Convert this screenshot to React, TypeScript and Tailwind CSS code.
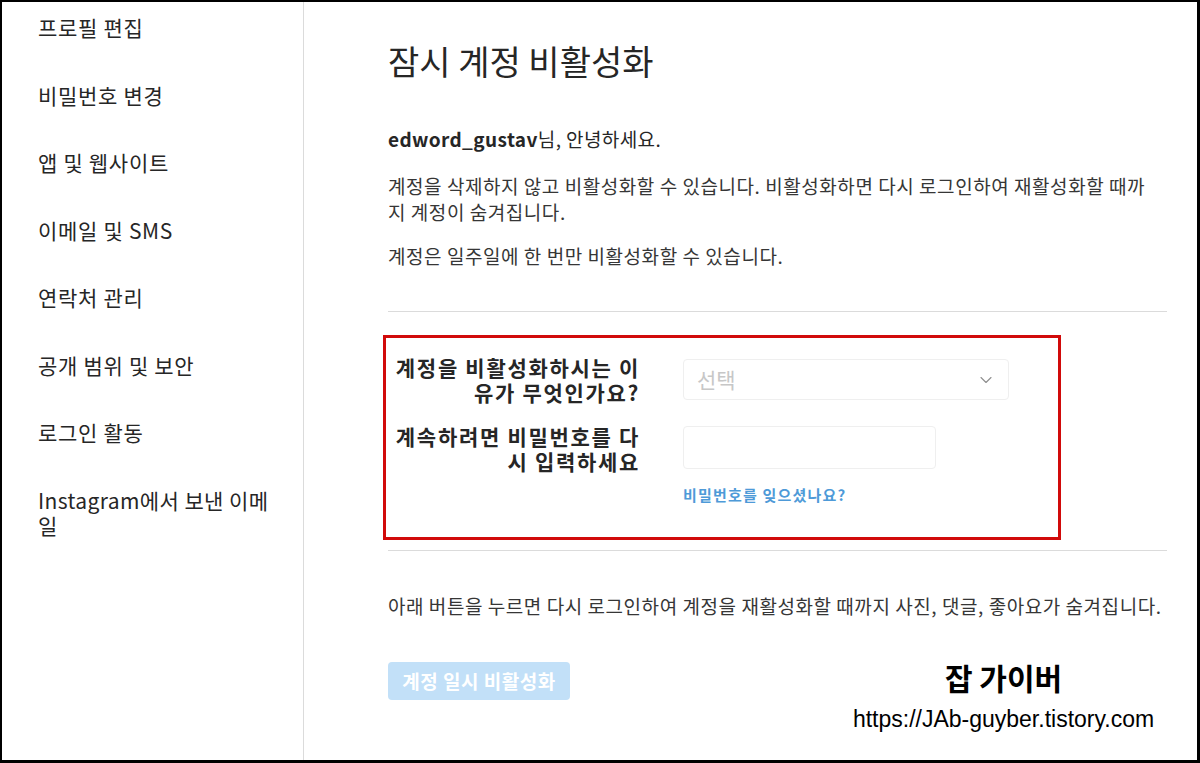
import React from 'react';
import { ChevronDown } from 'lucide-react';

const font = "font-['Noto_Sans_CJK_KR','Noto_Sans',sans-serif]";

const menu = [
  '프로필 편집',
  '비밀번호 변경',
  '앱 및 웹사이트',
  '이메일 및 SMS',
  '연락처 관리',
  '공개 범위 및 보안',
  '로그인 활동',
];

export default function App() {
  return (
    <div
      className={`relative w-[1200px] h-[763px] bg-white border-l-2 border-t-2 border-r-[3px] border-b-[3px] border-black flex overflow-hidden text-[#262626] ${font}`}
    >
      {/* Sidebar */}
      <aside className="w-[302px] shrink-0 border-r border-[#dbdbdb] pl-[36px] pt-[13px] flex flex-col gap-[42.5px]">
        {menu.map((m) => (
          <div key={m} className="text-[21px] leading-[25px] tracking-[0.7px] text-[#262626] whitespace-nowrap">
            {m}
          </div>
        ))}
        <div className="text-[21px] leading-[25px] tracking-[0.4px] text-[#262626] w-[250px]">
          Instagram에서 보낸 이메
          <br />
          일
        </div>
      </aside>

      {/* Main */}
      <main className="flex-1 pl-[84px] pr-[30px] pt-[37px] flex flex-col">
        <h1 className="text-[34px] leading-[44px] font-normal text-[#262626]">잠시 계정 비활성화</h1>

        <p className="mt-[43px] text-[19px] leading-[26px] tracking-[0.4px]">
          <span className="font-bold">edword_gustav</span>님, 안녕하세요.
        </p>
        <p className="mt-[21px] text-[19px] leading-[26px] tracking-[0.55px] text-[#363636] whitespace-nowrap">
          계정을 삭제하지 않고 비활성화할 수 있습니다. 비활성화하면 다시 로그인하여 재활성화할 때까
          <br />
          지 계정이 숨겨집니다.
        </p>
        <p className="mt-[18px] text-[19px] leading-[26px] tracking-[0.55px] text-[#363636]">
          계정은 일주일에 한 번만 비활성화할 수 있습니다.
        </p>

        <div className="mt-[42px] h-px bg-[#dbdbdb]" />

        {/* Highlighted form */}
        <div className="mt-[23px] ml-[-5px] w-[678px] h-[205px] border-[3px] border-[#d10a0a] pt-[17px]">
          <div className="flex">
            <div className="w-[254px] text-right text-[21px] leading-[25px] tracking-[1.7px] font-bold whitespace-nowrap">
              계정을 비활성화하시는 이
              <br />
              유가 무엇인가요?
            </div>
            <div className="ml-[43px] mt-[4px] w-[326px] h-[41px] border border-[#efefef] rounded-[4px] bg-white flex items-center justify-between pl-[13px] pr-[12px]">
              <span className="text-[21px] text-[#c7c7c7]">선택</span>
              <ChevronDown size={20} strokeWidth={1.3} className="text-[#8e8e8e]" />
            </div>
          </div>

          <div className="flex mt-[19px]">
            <div className="w-[254px] text-right text-[21px] leading-[25px] tracking-[1.7px] font-bold whitespace-nowrap">
              계속하려면 비밀번호를 다
              <br />
              시 입력하세요
            </div>
            <div className="ml-[43px] flex flex-col">
              <div className="mt-[2px] w-[253px] h-[43px] border border-[#efefef] rounded-[4px] bg-white" />
              <a className="mt-[17px] text-[15px] leading-[18px] tracking-[1.2px] font-semibold text-[#4e9ad8]">
                비밀번호를 잊으셨나요?
              </a>
            </div>
          </div>
        </div>

        <div className="mt-[10px] h-px bg-[#dbdbdb]" />

        <p className="mt-[42px] text-[19px] leading-[26px] tracking-[0.55px] text-[#363636] whitespace-nowrap">
          아래 버튼을 누르면 다시 로그인하여 계정을 재활성화할 때까지 사진, 댓글, 좋아요가 숨겨집니다.
        </p>

        <button className="mt-[43px] w-[182px] h-[38px] rounded-[4px] bg-[#c2e0f8] text-white text-[19px] tracking-[0.5px] font-bold">
          계정 일시 비활성화
        </button>
      </main>

      {/* Watermark overlay */}
      <div className="absolute left-[841px] top-[656px] w-[321px] flex flex-col items-center">
        <div className="text-[30px] leading-[38px] font-bold text-black">잡 가이버</div>
        <div className="mt-[9px] text-[23px] leading-[28px] text-black font-['Liberation_Sans',sans-serif]">
          https://JAb-guyber.tistory.com
        </div>
      </div>
    </div>
  );
}
